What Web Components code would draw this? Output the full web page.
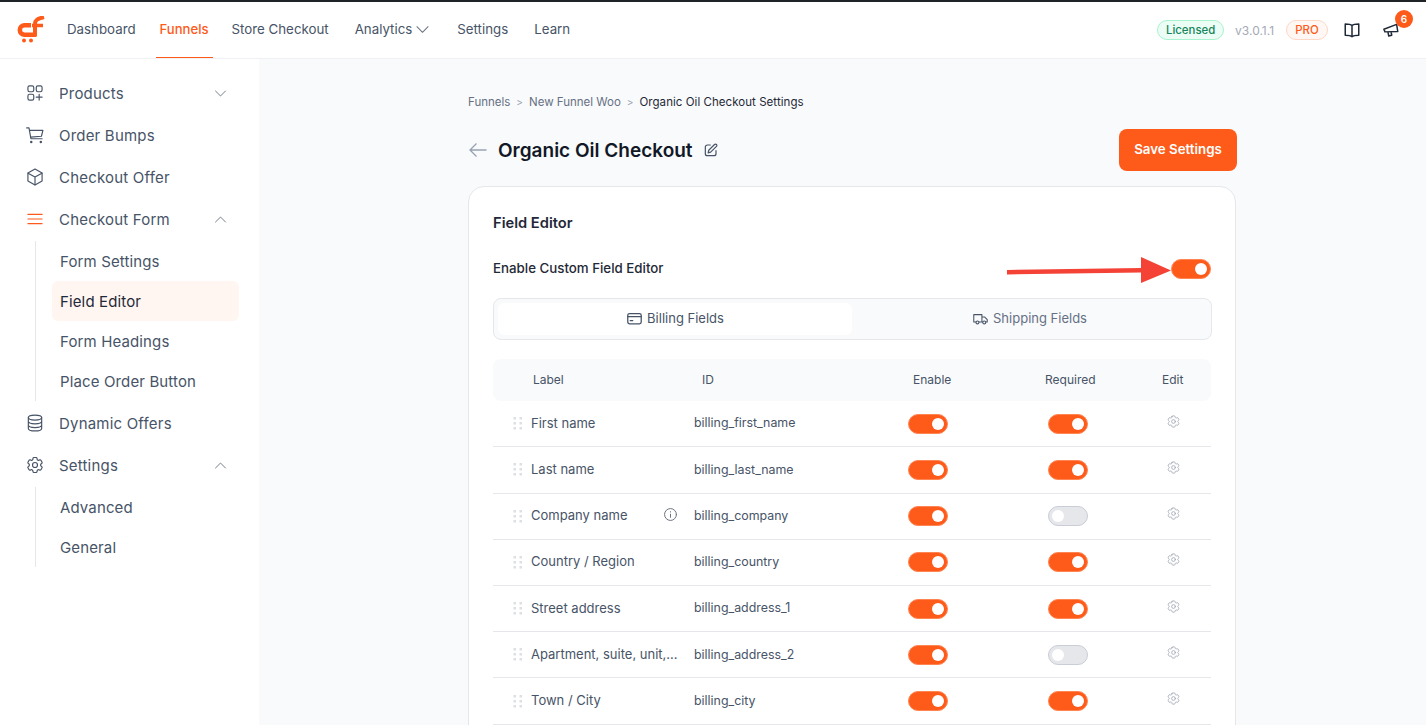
<!DOCTYPE html>
<html>
<head>
<meta charset="utf-8">
<title>Field Editor</title>
<style>
  html, body { margin: 0; padding: 0; height: 100%; overflow: hidden; }
  body { font-family: Inter, "Noto Sans", sans-serif; background: #f9fafb; color: #111827; }
</style>
</head>
<body>
<app-shell>
  <top-bar slot="top"></top-bar>
  <side-menu slot="side"></side-menu>
  <field-page></field-page>
</app-shell>

<script>
const ICONS = {
  products: '<rect x="3.5" y="3.5" width="7" height="7" rx="2"/><rect x="13.5" y="3.5" width="7" height="7" rx="2"/><rect x="3.5" y="13.5" width="7" height="7" rx="2"/><path d="M17 13.5v7M13.5 17h7"/>',
  cart: '<path d="M2 3.500h2.800l2.300 13h13.400"/><path d="M5.400 6.500h16.100l-1.800 7-13 1"/><circle cx="7.500" cy="20.500" r=".8"/><circle cx="19" cy="20.500" r=".8"/>',
  box: '<path d="M12 2.5l8.5 4.8v9.4L12 21.5l-8.5-4.8V7.300z"/><path d="M3.700 7.400L12 12l8.300-4.600M12 12v9.300"/>',
  menu: '<path d="M3.500 6.500h17M3.500 12h17M3.500 17.500h17"/>',
  db: '<ellipse cx="12" cy="5.500" rx="8" ry="3"/><path d="M4 5.500v13c0 1.700 3.600 3 8 3s8-1.300 8-3v-13M4 10c0 1.700 3.600 3 8 3s8-1.300 8-3M4 14.500c0 1.700 3.600 3 8 3s8-1.300 8-3"/>',
  gear: '<path d="M9.594 3.940c.090-.542.560-.940 1.110-.940h2.593c.550 0 1.020.398 1.110.940l.213 1.281c.063.374.313.686.645.870.074.040.147.083.220.127.324.196.720.257 1.075.124l1.217-.456a1.125 1.125 0 011.370.490l1.296 2.247a1.125 1.125 0 01-.260 1.431l-1.003.827c-.293.240-.438.613-.431.992a6.759 6.759 0 010 .255c-.007.378.138.750.430.990l1.005.828c.424.350.534.954.260 1.430l-1.298 2.247a1.125 1.125 0 01-1.369.491l-1.217-.456c-.355-.133-.750-.072-1.076.124a6.570 6.570 0 01-.220.128c-.331.183-.581.495-.644.869l-.213 1.280c-.090.543-.560.941-1.110.941h-2.594c-.550 0-1.020-.398-1.110-.940l-.213-1.281c-.062-.374-.312-.686-.644-.870a6.520 6.520 0 01-.220-.127c-.325-.196-.720-.257-1.076-.124l-1.217.456a1.125 1.125 0 01-1.369-.490l-1.297-2.247a1.125 1.125 0 01.260-1.431l1.004-.827c.292-.240.437-.613.430-.992a6.932 6.932 0 010-.255c.007-.378-.138-.750-.430-.990l-1.004-.828a1.125 1.125 0 01-.260-1.430l1.297-2.247a1.125 1.125 0 011.370-.491l1.216.456c.356.133.751.072 1.076-.124.072-.044.146-.087.220-.128.332-.183.582-.495.644-.869l.214-1.281z"/><circle cx="12" cy="12" r="3"/>',
  down: '<path d="M5 8.500l7 7 7-7"/>',
  up: '<path d="M5 15.500l7-7 7 7"/>',
  book: '<path d="M12 6C10.500 4.500 8 4 3 4v15c5 0 7.500.5 9 2 1.500-1.500 4-2 9-2V4c-5 0-7.500.5-9 2zM12 6v15"/>',
  horn: '<path d="M2.500 11l17-6.500 1.500 9.500-17 .5zM8 15l1 5 4-1-.8-4"/>',
  edit: '<path d="M11 4.500H6.500a3 3 0 00-3 3v10a3 3 0 003 3h10a3 3 0 003-3V13"/><path d="M17.300 3.700a2 2 0 012.900 2.900L11.500 15.300l-3.800.9.900-3.800z"/>',
  card: '<rect x="2.500" y="5" width="19" height="14.500" rx="2.500"/><path d="M2.500 9.500h19M6 15h3.500"/>',
  truck: '<path d="M2.500 6.500h11.500v10.500H10M5.500 17H2.500V6.500M14 10h4l3.500 3.500V17h-2M14 17h1"/><circle cx="7.700" cy="17.500" r="2.100"/><circle cx="17.300" cy="17.500" r="2.100"/>',
  info: '<circle cx="12" cy="12" r="9.500"/><path d="M12 11.500v5M12 7.500v.6"/>'
};
const icon = (name, size, width = 1.5) =>
  `<svg width="${size}" height="${size}" viewBox="0 0 24 24" fill="none" stroke="currentColor" stroke-width="${width}" stroke-linecap="round" stroke-linejoin="round">${ICONS[name]}</svg>`;

class AppShell extends HTMLElement {
  constructor() {
    super();
    this.attachShadow({ mode: "open" }).innerHTML = `
      <style>
        :host { display: grid; grid-template: 57px 1fr / 259px 1fr; height: 100vh; border-top: 2px solid #1d2327; box-sizing: border-box; overflow: hidden; }
        .top { grid-column: 1 / 3; }
        .side { background: #fff; }
        main { overflow: hidden; padding-left: 209px; }
      </style>
      <div class="top"><slot name="top"></slot></div>
      <div class="side"><slot name="side"></slot></div>
      <main><slot></slot></main>`;
  }
}

class TopBar extends HTMLElement {
  constructor() {
    super();
    this.attachShadow({ mode: "open" }).innerHTML = `
      <style>
        :host { display: flex; align-items: center; height: 57px; box-sizing: border-box; background: #fff; border-bottom: 1px solid #eef0f3; padding: 0 17px; font-size: 13.3px; color: #475467; }
        .logo { display: flex; width: 28px; height: 28px; margin-right: 18px; }
        nav { display: flex; height: 100%; gap: 16px; }
        nav a { display: flex; align-items: center; gap: 1px; padding: 0 4px 2px; height: 56px; box-sizing: border-box; }
        nav a.on { color: #fe5a1a; font-weight: 500; font-size: 13.1px; border-bottom: 1px solid #fe5a1a; padding: 0 4px 1px; }
        nav a.store { margin-left: -1px; }
        nav a.analytics { margin-left: 2px; }
        nav a.set { margin-left: 1px; }
        nav a.learn { margin-left: 2px; }
        nav svg { color: #6b7280; }
        .right { display: flex; align-items: center; margin-left: auto; }
        .pill { display: flex; align-items: center; height: 20px; box-sizing: border-box; border-radius: 10px; font-size: 11.4px; font-weight: 500; padding-bottom: 1px; }
        .lic { padding: 0 0 1px; width: 67px; background: #ecfdf5; border: 1px solid #a7f3d0; color: #16855b; justify-content: center; }
        .ver { color: #a3a9b5; font-size: 12px; margin: 0 12px 0 11px; }
        .pro { width: 42px; justify-content: center; background: #fff7f3; border: 1px solid #fed7c7; color: #fe5a1a; }
        .book { display: flex; margin-left: 15px; color: #1f2937; }
        .horn { position: relative; display: flex; margin-left: 21.4px; margin-right: 8.6px; color: #1f2937; }
        .count { position: absolute; left: 12.6px; top: -11.5px; width: 18px; height: 18px; border-radius: 50%; background: #fe5a1a; color: #fff; font-size: 10px; font-weight: 600; display: flex; align-items: center; justify-content: center; }
      </style>
      <span class="logo">
        <svg width="28" height="28" viewBox="0 0 28 28" fill="none">
          <path d="M14 9.300H7.500a4.700 4.700 0 000 9.400H19.500" stroke="#fe5a1a" stroke-width="4.500"/>
          <path d="M18 20V8C18 4 20 3 27 1" stroke="#fe5a1a" stroke-width="4"/>
          <path d="M15 9.500H26" stroke="#fe5a1a" stroke-width="3.500"/>
          <circle cx="7" cy="24.500" r="2" fill="#fe5a1a"/><circle cx="14" cy="24.500" r="2" fill="#fe5a1a"/>
        </svg>
      </span>
      <nav>
        <a>Dashboard</a><a class="on">Funnels</a><a class="store">Store Checkout</a>
        <a class="analytics">Analytics ${icon("down", 19, 1.3)}</a><a class="set">Settings</a><a class="learn">Learn</a>
      </nav>
      <div class="right">
        <span class="pill lic">Licensed</span>
        <span class="ver">v3.0.1.1</span>
        <span class="pill pro">PRO</span>
        <span class="book">${icon("book", 18, 2)}</span>
        <span class="horn">${icon("horn", 18, 2)}<span class="count">6</span></span>
      </div>`;
  }
}

class SideItem extends HTMLElement {
  constructor() {
    super();
    const open = this.getAttribute("chevron");
    const active = this.hasAttribute("active");
    this.attachShadow({ mode: "open" }).innerHTML = `
      <style>
        :host { display: flex; align-items: center; height: 42px; padding: 0 30px 0 25px; font-size: 15px; letter-spacing: .2px; color: #475467; }
        .ic { display: flex; width: 20px; height: 20px; margin-right: 14px; color: ${active ? "#fe5a1a" : "#475467"}; }
        .chev { display: flex; margin-left: auto; color: #6b7280; }
      </style>
      <span class="ic">${icon(this.getAttribute("icon"), 20, 1.4)}</span>
      <slot></slot>
      ${open ? `<span class="chev">${icon(open, 17, 1.3)}</span>` : ""}`;
  }
}

class SubMenu extends HTMLElement {
  constructor() {
    super();
    this.attachShadow({ mode: "open" }).innerHTML = `
      <style>
        :host { display: block; margin: 1px 20px 1px 35px; border-left: 1px solid #e5e7eb; padding-left: 16px; }
      </style>
      <slot></slot>`;
  }
}

class SubItem extends HTMLElement {
  constructor() {
    super();
    this.attachShadow({ mode: "open" }).innerHTML = `
      <style>
        :host { display: flex; align-items: center; height: 40px; padding-left: 8px; font-size: 15px; letter-spacing: .13px; color: #475467; border-radius: 6px; }
        :host([active]) { background: #fff6f2; color: #1f2937; }
      </style>
      <slot></slot>`;
  }
}

class SideMenu extends HTMLElement {
  constructor() {
    super();
    this.attachShadow({ mode: "open" }).innerHTML = `
      <style>
        :host { display: block; padding-top: 13px; }
      </style>
      <side-item icon="products" chevron="down">Products</side-item>
      <side-item icon="cart">Order Bumps</side-item>
      <side-item icon="box">Checkout Offer</side-item>
      <side-item icon="menu" chevron="up" active>Checkout Form</side-item>
      <sub-menu>
        <sub-item>Form Settings</sub-item>
        <sub-item active>Field Editor</sub-item>
        <sub-item>Form Headings</sub-item>
        <sub-item>Place Order Button</sub-item>
      </sub-menu>
      <side-item icon="db">Dynamic Offers</side-item>
      <side-item icon="gear" chevron="up">Settings</side-item>
      <sub-menu>
        <sub-item>Advanced</sub-item>
        <sub-item>General</sub-item>
      </sub-menu>`;
  }
}

class ToggleSwitch extends HTMLElement {
  constructor() {
    super();
    this.attachShadow({ mode: "open" }).innerHTML = `
      <style>
        :host { display: block; width: 40px; height: 20px; box-sizing: border-box; border-radius: 10px; background: #e5e7eb; border: 1px solid #c9ced6; position: relative; }
        :host([on]) { background: #fe5a1a; border-color: #ff8653; }
        i { position: absolute; top: 3px; left: 3px; width: 12px; height: 12px; border-radius: 50%; background: #fff; }
        :host([on]) i { left: auto; right: 3px; }
      </style>
      <i></i>`;
  }
}

class FieldRow extends HTMLElement {
  constructor() {
    super();
    const dots = [1, 6, 11].map(y => `<rect x="0.500" y="${y - 1}" width="2.500" height="2.500"/><rect x="6.500" y="${y - 1}" width="2.500" height="2.500"/>`).join("");
    this.attachShadow({ mode: "open" }).innerHTML = `
      <style>
        :host { display: grid; grid-template-columns: 20px 18px 163px 214px 40px 100px 40px 1fr; align-items: center; height: 46.24px; box-sizing: border-box; border-bottom: 1px solid #e5e7eb; font-size: 13px; color: #475467; }
        .drag { grid-column: 2; display: flex; }
        .label { display: flex; align-items: center; justify-content: space-between; padding: 0 16px 2px 0; }
        .info { display: flex; color: #6b7280; margin-top: -1px; }
        .id { color: #475467; font-size: 12.4px; padding-bottom: 1.5px; }
        .gear { display: flex; margin-left: 78px; margin-top: -5px; color: #a3a9b5; }
      </style>
      <svg class="drag" width="10" height="13" viewBox="0 0 10 13" fill="#dcdfe4">${dots}</svg>
      <span class="label"><slot></slot>${this.hasAttribute("info") ? `<span class="info">${icon("info", 15, 1.6)}</span>` : ""}</span>
      <span class="id">${this.getAttribute("field")}</span>
      <toggle-switch on></toggle-switch>
      <span></span>
      <toggle-switch ${this.hasAttribute("optional") ? "" : "on"}></toggle-switch>
      <span class="gear">${icon("gear", 15, 1.4)}</span>`;
  }
}

class FieldPage extends HTMLElement {
  constructor() {
    super();
    this.attachShadow({ mode: "open" }).innerHTML = `
      <style>
        :host { display: block; width: 769px; }
        .crumbs { display: flex; align-items: center; gap: 6px; height: 15px; margin-top: 35px; font-size: 11.5px; color: #667085; }
        .crumbs b { font-weight: 400; color: #98a2b3; font-size: 10px; }
        .crumbs span:last-child { color: #1f2937; letter-spacing: .05px; }
        .head { display: flex; align-items: center; margin-top: 20px; height: 42px; }
        .back { display: flex; color: #98a2b3; margin-right: 10px; }
        h1 { margin: 0; font-size: 19px; font-weight: 600; color: #111827; }
        .pen { display: flex; color: #475467; margin-left: 10px; }
        button { margin-left: auto; width: 118px; height: 42px; padding: 0 0 2px; border: 0; border-radius: 8px; background: #fe5a1a; color: #fff; font: 600 13.3px Inter, sans-serif; }
        .card { position: relative; margin-top: 15px; width: 768px; box-sizing: border-box; background: #fff; border: 1px solid #e5e7eb; border-radius: 16px; padding: 27px 24px 0; height: 600px; }
        h2 { margin: 0; font-size: 14.7px; font-weight: 600; line-height: 18px; color: #1f2937; }
        .enable { display: flex; align-items: center; justify-content: space-between; margin-top: 27px; height: 20px; font-size: 13.3px; font-weight: 500; color: #1f2937; }
        .enable span { padding-bottom: 2px; }
        .arrow { position: absolute; left: 538px; top: 70px; }
        .tabs { display: grid; grid-template-columns: 354px 1fr; height: 42px; box-sizing: border-box; margin: 19px -1px 0 0; padding: 4px; background: #f9fafb; border: 1px solid #e5e7eb; border-radius: 8px; font-size: 13px; color: #667085; }
        .tabs div { display: flex; align-items: center; justify-content: center; gap: 4px; padding-bottom: 2px; }
        .tabs svg { color: #475467; }
        .tabs .on { background: #fff; border-radius: 6px; color: #475467; }
        .cols { display: grid; grid-template-columns: 40px 169px 211px 132px 117px 1fr; align-items: center; height: 42.04px; padding-bottom: 2px; box-sizing: border-box; margin-top: 19px; background: #f9fafb; border-radius: 8px; font-size: 12px; color: #475467; }
        .cols span:first-child { grid-column: 2; }
      </style>
      <div class="crumbs"><span>Funnels</span><b>&gt;</b><span>New Funnel Woo</span><b>&gt;</b><span>Organic Oil Checkout Settings</span></div>
      <div class="head">
        <span class="back"><svg width="20" height="20" viewBox="0 0 20 20" fill="none" stroke="currentColor" stroke-width="1.300"><path d="M18.500 10H2M8.500 3.500L2 10l6.500 6.500"/></svg></span>
        <h1>Organic Oil Checkout</h1>
        <span class="pen">${icon("edit", 16, 1.8)}</span>
        <button>Save Settings</button>
      </div>
      <section class="card">
        <h2>Field Editor</h2>
        <div class="enable"><span>Enable Custom Field Editor</span> <toggle-switch on></toggle-switch></div>
        <svg class="arrow" width="166" height="30" viewBox="0 0 166 30"><path d="M0 17.500L134 15.500V26L164 13.500 134 0V11L0 13z" fill="#f44336"/></svg>
        <div class="tabs">
          <div class="on">${icon("card", 17, 1.8)} Billing Fields</div>
          <div>${icon("truck", 17, 1.5)} Shipping Fields</div>
        </div>
        <div class="cols"><span>Label</span><span>ID</span><span>Enable</span><span>Required</span><span>Edit</span></div>
        <field-row field="billing_first_name">First name</field-row>
        <field-row field="billing_last_name">Last name</field-row>
        <field-row field="billing_company" info optional>Company name</field-row>
        <field-row field="billing_country">Country / Region</field-row>
        <field-row field="billing_address_1">Street address</field-row>
        <field-row field="billing_address_2" optional>Apartment, suite, unit,...</field-row>
        <field-row field="billing_city">Town / City</field-row>
      </section>`;
  }
}

customElements.define("toggle-switch", ToggleSwitch);
customElements.define("field-row", FieldRow);
customElements.define("side-item", SideItem);
customElements.define("sub-item", SubItem);
customElements.define("sub-menu", SubMenu);
customElements.define("side-menu", SideMenu);
customElements.define("top-bar", TopBar);
customElements.define("field-page", FieldPage);
customElements.define("app-shell", AppShell);
</script>
</body>
</html>
